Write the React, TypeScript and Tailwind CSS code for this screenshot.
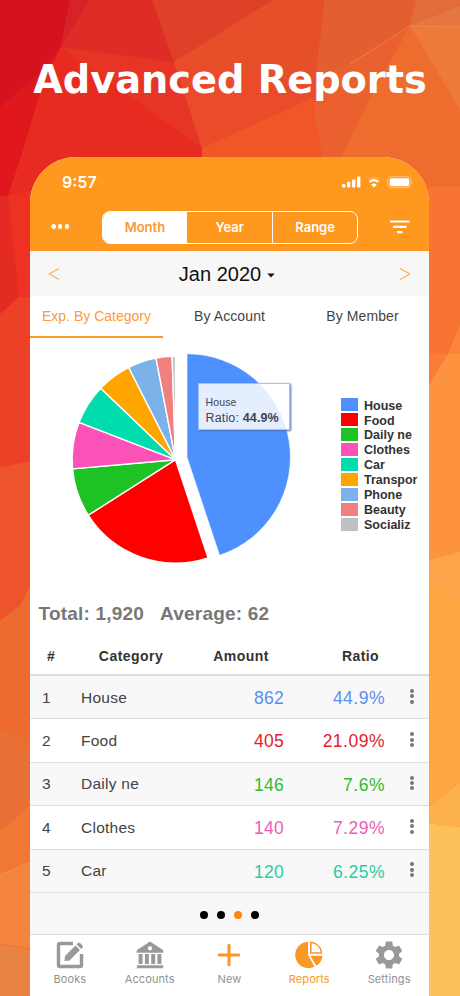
import type { ReactNode } from "react";

type Slice = { name: string; share: number; color: string };

const SLICES: Slice[] = [
  { name: "House", share: 44.9, color: "#4d90fe" },
  { name: "Food", share: 21.09, color: "#ff0000" },
  { name: "Daily ne", share: 7.6, color: "#1dc224" },
  { name: "Clothes", share: 7.29, color: "#fb52b8" },
  { name: "Car", share: 6.25, color: "#00dcae" },
  { name: "Transpor", share: 5.4, color: "#ffa500" },
  { name: "Phone", share: 4.45, color: "#7cb2ea" },
  { name: "Beauty", share: 2.5, color: "#f08080" },
  { name: "Socializ", share: 0.52, color: "#c0c0c0" },
];

const ROWS = [
  { name: "House", amount: "862", ratio: "44.9%", color: "text-[#5a8ff0]" },
  { name: "Food", amount: "405", ratio: "21.09%", color: "text-[#e5202c]" },
  { name: "Daily ne", amount: "146", ratio: "7.6%", color: "text-[#33bb35]" },
  { name: "Clothes", amount: "140", ratio: "7.29%", color: "text-[#ee5cb4]" },
  { name: "Car", amount: "120", ratio: "6.25%", color: "text-[#27cf9f]" },
];

const RADIUS = 103.4;

function slicePath(cx: number, cy: number, from: number, to: number) {
  const a = (from / 100) * Math.PI * 2;
  const b = (to / 100) * Math.PI * 2;
  const x1 = cx + RADIUS * Math.sin(a);
  const y1 = cy - RADIUS * Math.cos(a);
  const x2 = cx + RADIUS * Math.sin(b);
  const y2 = cy - RADIUS * Math.cos(b);
  return `M${cx} ${cy}L${x1} ${y1}A${RADIUS} ${RADIUS} 0 0 1 ${x2} ${y2}Z`;
}

function Backdrop() {
  return (
    <svg className="absolute inset-0" width="460" height="996" viewBox="0 0 460 996">
      <rect width="300" height="996" fill="#e82b20" />
      <rect x="300" width="160" height="996" fill="#ed652d" />
      <path d="M0 0H70L61 47L39 74L0 108Z" fill="#d5131f" />
      <path d="M0 108L43 84L20 160L8 196H0Z" fill="#e0181d" />
      <path d="M0 108L39 74L61 47L43 84Z" fill="#dd191f" />
      <path d="M70 0H90L61 47Z" fill="#d6232a" />
      <path d="M90 0H152L174 62L61 47Z" fill="#de2c26" />
      <path d="M61 47L174 62L202 148L133 99Z" fill="#e63425" />
      <path d="M61 47L133 99L202 148L160 157L30 200L8 196L20 160L43 84Z" fill="#e82b20" />
      <path d="M152 0H272L174 62Z" fill="#de4028" />
      <path d="M272 0H325L316 76V96L202 148L174 62Z" fill="#e5502b" />
      <path d="M174 62L316 84V96L202 148Z" fill="#ea4b2b" />
      <path d="M316 96L202 148V160H325L315 115Z" fill="#f05626" />
      <path d="M325 0H416L410 26L350 64L315 82Z" fill="#e35f30" />
      <path d="M416 0H460V6L410 26Z" fill="#e16d3a" />
      <path d="M460 6V27L410 26Z" fill="#e57840" />
      <path d="M410 26L350 64L315 82V120L323 160H342L370 97Z" fill="#ea602e" />
      <path d="M410 26L370 97L340 160V188H460V110Z" fill="#ee6c2d" />
      <path d="M410 26L460 27V110Z" fill="#ed793b" />
      <path d="M410 26L350 64M410 26L460 27" stroke="#ee9564" strokeWidth=".6" />

      <path d="M8 196L31 190V297H19L12 235Z" fill="#ed3224" />
      <path d="M0 196H8L19 297L0 314Z" fill="#e42b23" />
      <path d="M0 314L19 297H31V461L0 467Z" fill="#ec4027" />
      <path d="M0 467L31 461V583L20 605L0 620Z" fill="#ed542c" />
      <path d="M0 620L20 605L31 583V804L0 831Z" fill="#ed6b31" />
      <path d="M0 730L31 740V804L0 831Z" fill="#e97034" />
      <path d="M0 831L31 804V860L0 873Z" fill="#f27835" />
      <path d="M0 873L31 860V949L0 944Z" fill="#f5843e" />
      <path d="M0 944L31 949V996H0Z" fill="#e98344" />

      <path d="M428 187H460V325L448 354L428 386Z" fill="#f77432" />
      <path d="M428 354H448L428 386Z" fill="#f97c38" />
      <path d="M460 325V552L428 560V386L448 354Z" fill="#fd933f" />
      <path d="M460 325V354H448Z" fill="#fa853b" />
      <path d="M428 560L460 552V782L428 807Z" fill="#fea642" />
      <path d="M428 580L460 598V552L428 560Z" fill="#fea54b" />
      <path d="M428 807L460 782V827L428 823Z" fill="#fdb14c" />
      <path d="M428 823L460 827V996H428Z" fill="#fec05a" />
    </svg>
  );
}

function StatusBar() {
  return (
    <div className="flex h-[46px] items-center justify-between pt-[3px] pl-[32px] pr-[15px] text-white">
      <span className="font-[Inter,sans-serif] text-[16px] font-semibold">9:57</span>
      <svg width="73" height="14" viewBox="0 0 73 14" fill="currentColor">
        <rect x="1" y="9" width="3.4" height="3.6" rx="1" />
        <rect x="6" y="6.8" width="3.4" height="5.8" rx="1" />
        <rect x="11" y="4.6" width="3.4" height="8" rx="1" />
        <rect x="16" y="1.5" width="3.4" height="11.1" rx="1" />
        <path d="M27.3 4.6Q33 0.2 38.7 4.6" fill="none" stroke="currentColor" strokeWidth="1.4" opacity=".25" />
        <path d="M28.6 7Q33 3.3 37.4 7" fill="none" stroke="currentColor" strokeWidth="2" />
        <path d="M30.3 9.6Q33 7.6 35.7 9.6L33 12.4Z" />
        <rect x="46.8" y="1.7" width="23" height="11" rx="3.4" fill="none" stroke="currentColor" strokeWidth=".8" opacity=".5" />
        <rect x="48.6" y="3.2" width="19.6" height="8" rx="2" />
        <path d="M71 5.2Q72.4 7.2 71 9.2Z" opacity=".6" />
      </svg>
    </div>
  );
}

function Toolbar() {
  return (
    <div className="flex h-[48px] items-center pb-px text-white">
      <div className="ml-[21px] flex w-[18px] justify-between">
        <i className="size-[4.5px] rounded-full bg-white" />
        <i className="size-[4.5px] rounded-full bg-white" />
        <i className="size-[4.5px] rounded-full bg-white" />
      </div>
      <div className="ml-[32.5px] mt-[2px] grid h-[33px] w-[256.5px] grid-cols-3 overflow-hidden rounded-[8px] border-[1.5px] border-white text-center font-[Inter,sans-serif] text-[13px] font-semibold leading-[31px]">
        <span className="bg-white text-[#f79a35]">Month</span>
        <span>Year</span>
        <span className="border-l border-white">Range</span>
      </div>
      <svg width="20" height="14" viewBox="0 0 20 14" className="ml-[32px]" fill="currentColor">
        <rect x="0" y="0.5" width="19.5" height="2" />
        <rect x="3" y="5.8" width="13.5" height="2.2" rx=".5" />
        <rect x="7" y="11" width="5.5" height="2.2" rx=".5" />
      </svg>
    </div>
  );
}

function PieChart() {
  let start = 0;
  return (
    <svg width="270" height="252" viewBox="30 338 270 252">
      {SLICES.map((s, i) => {
        const from = start;
        start += s.share;
        // the selected slice is pulled out of the pie
        const d = i === 0 ? slicePath(187, 457.2, from, start) : slicePath(175.5, 459.7, from, start);
        return <path key={s.name} d={d} fill={s.color} stroke="#fff" strokeWidth={i === 0 ? 0.6 : 1.4} />;
      })}
    </svg>
  );
}

function ChartPanel() {
  return (
    <div className="relative flex h-[252px]">
      <PieChart />
      <div className="absolute left-[167.5px] top-[45px] h-[47px] w-[92px] border border-[#a5c1f5] bg-white/85 pl-[7px] pt-[11px] text-[#3e4452] shadow-[1px_1px_2px_#4d72b8]">
        <p className="text-[10.5px] leading-[14px] tracking-[0.15px]">House</p>
        <p className="mt-px whitespace-nowrap text-[12.5px] leading-[17px] tracking-[0.15px]">
          Ratio: <b>44.9%</b>
        </p>
      </div>
      <ul className="ml-[41px] mt-[60px]">
        {SLICES.map((s) => (
          <li key={s.name} className="flex h-[14.93px] items-center gap-[6px] whitespace-nowrap text-[12.5px] font-bold text-[#333]">
            <i className="mb-[1px] h-[13px] w-[17px]" style={{ background: s.color }} />
            <span className="pt-[1px]">{s.name}</span>
          </li>
        ))}
      </ul>
    </div>
  );
}

function ReportTable() {
  return (
    <div>
      <div className="grid h-[38px] grid-cols-[42px_118px_102px_137px] border-b-2 border-[#dedede] text-center text-[14px] font-bold leading-[37px] tracking-[0.45px] text-[#333]">
        <span>#</span>
        <span>Category</span>
        <span>Amount</span>
        <span>Ratio</span>
      </div>
      {ROWS.map((r, i) => (
        <div
          key={r.name}
          className="grid h-[43.4px] grid-cols-[51px_100px_103px_101px_44px] items-center border-b-[1.5px] border-[#dedede] text-[15.5px] tracking-[0.25px] text-[#444] odd:bg-white even:bg-[#f8f8f8]"
        >
          <span className="pl-[12px]">{i + 1}</span>
          <span>{r.name}</span>
          <span className={`pt-[2px] text-right text-[17.5px] tracking-[0.3px] ${r.color}`}>{r.amount}</span>
          <span className={`pt-[2px] text-right text-[17.5px] tracking-[0.5px] ${r.color}`}>{r.ratio}</span>
          <span className="flex flex-col items-center gap-[1.4px] pb-[2px] pl-[10px]">
            <i className="size-[4px] rounded-full bg-[#777]" />
            <i className="size-[4px] rounded-full bg-[#777]" />
            <i className="size-[4px] rounded-full bg-[#777]" />
          </span>
        </div>
      ))}
    </div>
  );
}

function NavItem({ label, active, children }: { label: string; active?: boolean; children: ReactNode }) {
  return (
    <div className={`flex flex-col items-center ${active ? "text-[#fa9828]" : "text-[#999]"}`}>
      <svg width="28" height="28" viewBox="0 0 28 28" fill="currentColor">
        {children}
      </svg>
      <span className={`mt-[3px] text-[11px] leading-[14px] tracking-[0.1px] ${active ? "" : "text-[#929292]"}`}>
        {label}
      </span>
    </div>
  );
}

function NavBar() {
  return (
    <nav className="grid h-[62px] grid-cols-5 border-t border-[#e0e0e0] bg-white pt-[6px] font-[Inter,sans-serif]">
      <NavItem label="Books">
        <path d="M17 2.5H4Q2.5 2.5 2.5 4V24Q2.5 25.5 4 25.5H24Q25.5 25.5 25.5 24V13" fill="none" stroke="currentColor" strokeWidth="3.4" />
        <path d="M9 15L19.5 4.5L24 9L13.5 19.5L8.6 20Z" />
        <path d="M20.6 3.4L22 2Q23 1 24 2L26.5 4.5Q27.5 5.5 26.5 6.5L25.1 7.9Z" />
      </NavItem>
      <NavItem label="Accounts">
        <path fillRule="evenodd" d="M14 .5L27.3 9.3V11.7H.7V9.3ZM14 5.3A2.1 2.1 0 1 0 14 9.5A2.1 2.1 0 1 0 14 5.3Z" />
        <path d="M2.6 13H6.6V23H2.6ZM8.9 13H12.9V23H8.9ZM15.2 13H19.2V23H15.2ZM21.4 13H25.4V23H21.4ZM.9 24.2H27.1V27.2H.9Z" />
      </NavItem>
      <NavItem label="New">
        <path d="M14 4.2V23.8M4.2 14H23.8" stroke="#fa9828" strokeWidth="3.1" strokeLinecap="round" />
      </NavItem>
      <NavItem label="Reports" active>
        <path d="M13 .8A13.2 13.2 0 1 0 19.5 25.7L13 13.8Z" />
        <path fillRule="evenodd" d="M15 .5A12.8 12.8 0 0 1 27.4 12.8H15ZM16.6 2.3V11.2H25.6A11 11 0 0 0 16.6 2.3Z" />
        <path d="M15.3 14.8H27.4A12.5 12.5 0 0 1 21.3 24.8Z" />
      </NavItem>
      <NavItem label="Settings">
        <path
          fillRule="evenodd"
          transform="translate(-2.8 -2.8) scale(1.4)"
          d="M19.14 12.94c.04-.3.06-.61.06-.94 0-.32-.02-.64-.07-.94l2.03-1.58c.18-.14.23-.41.12-.61l-1.92-3.32c-.12-.22-.37-.29-.59-.22l-2.39.96c-.5-.38-1.03-.7-1.62-.94l-.36-2.54c-.04-.24-.24-.41-.48-.41h-3.84c-.24 0-.43.17-.47.41l-.36 2.54c-.59.24-1.13.57-1.62.94l-2.39-.96c-.22-.08-.47 0-.59.22L2.74 8.87c-.12.21-.08.47.12.61l2.03 1.58c-.05.3-.09.63-.09.94s.02.64.07.94l-2.03 1.58c-.18.14-.23.41-.12.61l1.92 3.32c.12.22.37.29.59.22l2.39-.96c.5.38 1.03.7 1.62.94l.36 2.54c.05.24.24.41.48.41h3.84c.24 0 .44-.17.47-.41l.36-2.54c.59-.24 1.13-.56 1.62-.94l2.39.96c.22.08.47 0 .59-.22l1.92-3.32c.12-.22.07-.47-.12-.61l-2.01-1.58zM12 15.6c-1.98 0-3.6-1.62-3.6-3.6s1.62-3.6 3.6-3.6 3.6 1.62 3.6 3.6-1.62 3.6-3.6 3.6z"
        />
      </NavItem>
    </nav>
  );
}

export default function App() {
  return (
    <div className="relative h-[996px] w-[460px] overflow-hidden font-['Liberation_Sans',Arial,sans-serif]">
      <Backdrop />
      <div className="relative">
        <h1 className="h-[157px] whitespace-nowrap pt-[56px] text-center font-['DejaVu_Sans',Verdana,sans-serif] text-[38.3px] font-bold leading-[48px] text-white">
          Advanced Reports
        </h1>
        <main className="ml-[30px] flex h-[839px] w-[399px] flex-col overflow-hidden rounded-t-[46px] bg-white">
          <header className="bg-[#ff981f]">
            <StatusBar />
            <Toolbar />
          </header>

          <div className="flex h-[45px] items-center justify-between bg-[#f7f7f8] px-[18px] text-[#fbae55]">
            <svg width="12" height="14" viewBox="0 0 12 14" fill="none" stroke="currentColor" strokeWidth="1.1">
              <path d="M11 1.5L1 7L11 12.5" />
            </svg>
            <span className="flex items-center gap-[6px] pr-[5px] text-[20px] text-[#111]">
              Jan 2020
              <svg width="8" height="5" viewBox="0 0 8 5" className="mt-[3px]">
                <path d="M.3 .5H7.7L4 4.5Z" fill="currentColor" />
              </svg>
            </span>
            <svg width="12" height="14" viewBox="0 0 12 14" fill="none" stroke="currentColor" strokeWidth="1.1">
              <path d="M1 1.5L11 7L1 12.5" />
            </svg>
          </div>

          <div className="grid h-[42px] grid-cols-3 text-center text-[14px] leading-[40px] text-[#444]">
            <span className="border-b-2 border-[#f99a2c] text-[#fa9c3c]">Exp. By Category</span>
            <span className="tracking-[0.1px]">By Account</span>
            <span className="tracking-[0.1px]">By Member</span>
          </div>

          <ChartPanel />

          <div className="flex h-[48px] items-center gap-[16px] pl-[8.5px] text-[19px] font-bold tracking-[0.2px] text-[#777]">
            <span>Total: 1,920</span>
            <span>Average: 62</span>
          </div>

          <ReportTable />

          <div className="flex flex-1 items-center justify-center gap-[9px] bg-[#f8f8f8] pt-[3px]">
            <i className="size-[8px] rounded-full bg-black" />
            <i className="size-[8px] rounded-full bg-black" />
            <i className="size-[8px] rounded-full bg-[#ff840f]" />
            <i className="size-[8px] rounded-full bg-black" />
          </div>
          <NavBar />
        </main>
      </div>
    </div>
  );
}
